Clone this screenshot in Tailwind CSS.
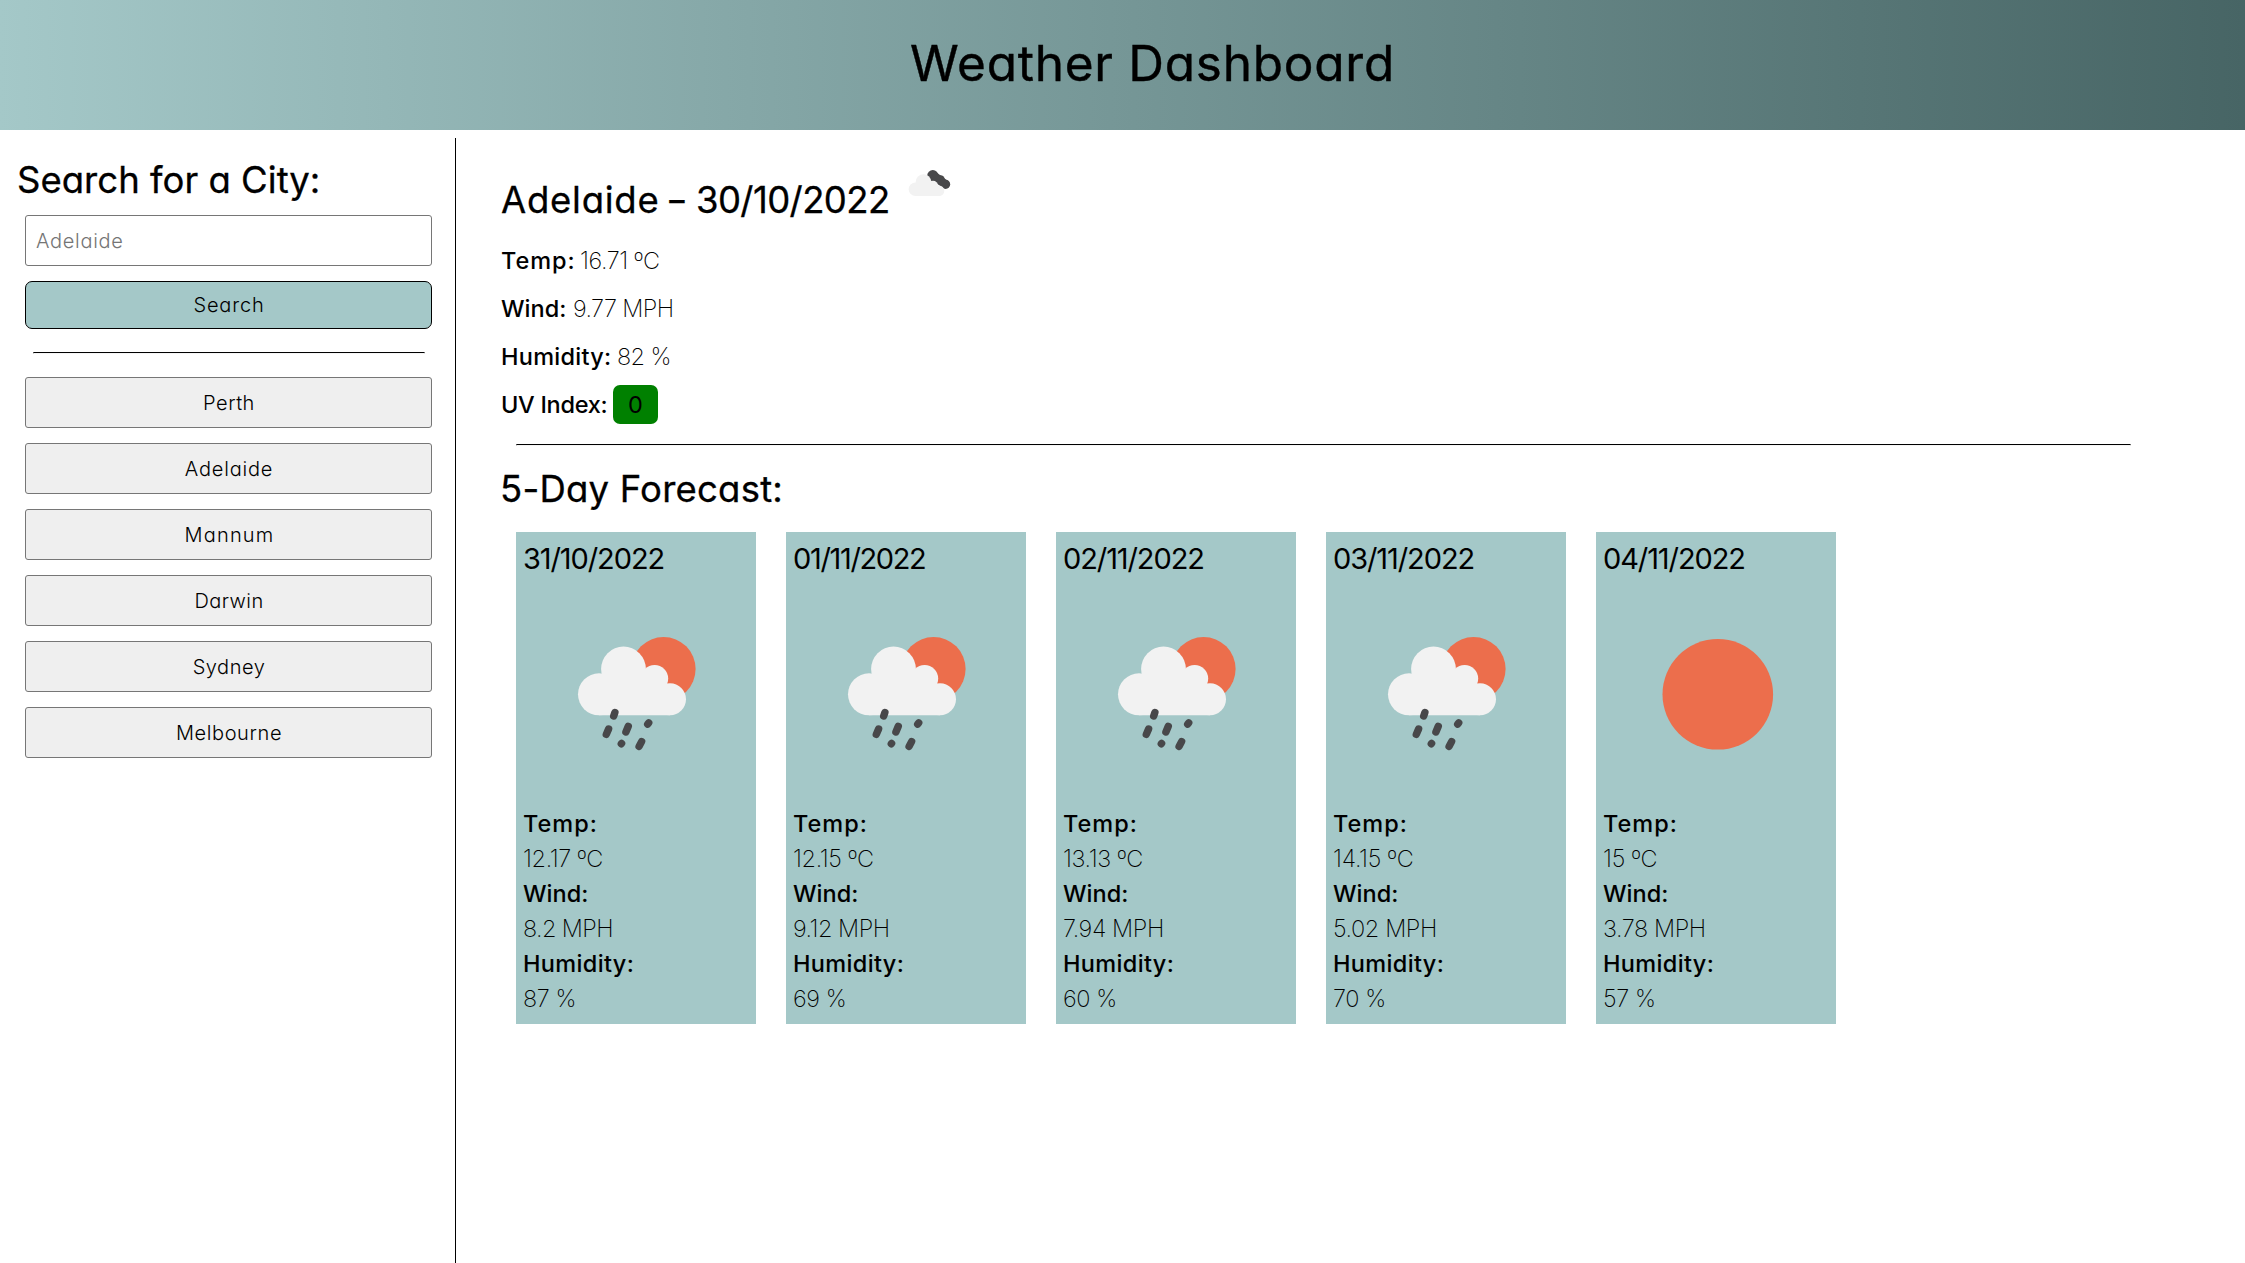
<!DOCTYPE html>
<html lang="en">
<head>
<meta charset="utf-8">
<title>Weather Dashboard</title>
<script src="https://cdn.jsdelivr.net/npm/@tailwindcss/browser@4"></script>
</head>
<body class="h-[1263px] overflow-hidden bg-white text-black font-['Inter','Liberation_Sans',sans-serif] [font-feature-settings:'cv11']">

<svg class="hidden">
  <symbol id="rain" viewBox="0 0 240 228">
    <circle cx="147.6" cy="91" r="32" fill="#ec6e4c"/>
    <g fill="#f2f2f2">
      <circle cx="107.5" cy="91" r="22.4"/>
      <circle cx="138.6" cy="100.5" r="13.6"/>
      <circle cx="83" cy="116.3" r="21"/>
      <circle cx="154" cy="121.3" r="16"/>
      <path d="M83 137.3H154V108L130 92H100L83 100Z"/>
    </g>
    <g stroke="#48484a" stroke-width="7.4" stroke-linecap="round">
      <path d="M97.7 138L98.9 134.6"/>
      <path d="M90.3 156.4L92.6 151"/>
      <path d="M109.9 154L112.3 148.3"/>
      <path d="M131.7 146.2L132.7 144.8"/>
      <path d="M105.3 165.8L105.6 165.4"/>
      <path d="M123.1 168.4L125.6 163.6"/>
    </g>
  </symbol>
</svg>

<header class="h-[130px] bg-linear-[90deg,#a4c8c8,#476565] pl-[60px] text-center">
  <h1 class="text-[49.5px] leading-[126px] tracking-[0.75px] [-webkit-text-stroke:0.4px_black]">Weather Dashboard</h1>
</header>

<div class="flex h-[1133px] pt-2">
  <aside class="w-[456px] shrink-0 border-r border-black pl-[25px] pr-[23px] pt-[17px]">
    <h2 class="-ml-[8px] text-[36.5px] leading-[51px] -mb-px tracking-[0.02px] [-webkit-text-stroke:0.3px_black]">Search for a City:</h2>
    <input class="mt-[10px] block h-[51px] w-full rounded-[3px] border border-[#767676] px-[10px] text-xl font-light tracking-[0.7px] placeholder:text-[#757575]" placeholder="Adelaide">
    <button class="mt-[15px] block h-12 w-full rounded-[7px] border border-black bg-[#a4c8c8] pl-px text-xl font-light tracking-[0.84px]">Search</button>
    <div class="ml-2 mr-[7px] mt-[23px] h-0.5 border border-t-black border-l-neutral-400 border-r-neutral-300 border-b-neutral-100"></div>
    <div class="mt-[23px] flex flex-col gap-[15px] text-xl font-light">
      <button class="h-[51px] rounded-[3px] border border-[#767676] bg-[#efefef] pl-px tracking-[0.5px]">Perth</button>
      <button class="h-[51px] rounded-[3px] border border-[#767676] bg-[#efefef] pl-px tracking-[0.8px]">Adelaide</button>
      <button class="h-[51px] rounded-[3px] border border-[#767676] bg-[#efefef] pl-0.5 tracking-[1.2px]">Mannum</button>
      <button class="h-[51px] rounded-[3px] border border-[#767676] bg-[#efefef] pl-px tracking-[0.45px]">Darwin</button>
      <button class="h-[51px] rounded-[3px] border border-[#767676] bg-[#efefef] pl-px tracking-[0.52px]">Sydney</button>
      <button class="h-[51px] rounded-[3px] border border-[#767676] bg-[#efefef] pl-px tracking-[0.61px]">Melbourne</button>
    </div>
  </aside>

  <main class="flex-1 pl-[45px] pt-[22px]">
    <div class="flex h-[77px] items-start">
      <h2 class="mt-[15px] w-[403px] shrink-0 whitespace-nowrap text-[36.5px] leading-[51px] [-webkit-text-stroke:0.3px_black]"><span class="inline-block w-[165px] tracking-[0.75px]">Adelaide</span><span class="inline-block w-[30px] origin-left scale-x-130">-</span><span class="tracking-[-0.6px]">30/10/2022</span></h2>
      <svg class="size-[50px]" viewBox="904 160 50 50">
        <g fill="#48484a">
          <circle cx="932.8" cy="175.6" r="5.6"/><circle cx="940.5" cy="179.6" r="4.3"/><circle cx="945.6" cy="184.3" r="4.6"/>
          <path d="M929 178L936 172L948 181L943 188Z"/>
        </g>
        <g fill="#f2f2f2">
          <circle cx="923.5" cy="182" r="7.8"/><circle cx="933" cy="185.7" r="5"/><circle cx="915.4" cy="189.3" r="6.7"/><circle cx="939" cy="190.7" r="5.3"/>
          <path d="M915 196H939V187L930 182H918L915 184Z"/>
        </g>
      </svg>
    </div>
    <div class="text-[23.5px] leading-[48px] font-extralight">
      <p class="flex"><span class="w-[79px] font-medium tracking-[0.95px]">Temp:</span><span class="tracking-[-0.45px]">16.71 ºC</span></p>
      <p class="flex"><span class="w-[72px] font-medium">Wind:</span><span class="tracking-[-0.6px]">9.77 MPH</span></p>
      <p class="flex"><span class="w-[116px] font-medium tracking-[0.27px]">Humidity:</span><span class="tracking-[-0.6px]">82 %</span></p>
      <p class="flex"><span class="w-[112px] font-medium tracking-[-0.29px]">UV Index:</span><span class="mt-1 h-[39px] w-[45px] rounded-[7px] bg-[#008000] text-center leading-10 font-normal">0</span></p>
    </div>
    <div class="mt-[15px] ml-[15px] h-0.5 w-[1615px] border border-t-black border-l-neutral-400 border-r-neutral-300 border-b-neutral-100"></div>
    <h2 class="mt-[18px] -ml-px text-[36.5px] leading-[51px] tracking-[0.22px] [-webkit-text-stroke:0.3px_black]">5-Day Forecast:</h2>

    <div class="mt-[17px] ml-[15px] flex gap-[30px] text-[23.5px] leading-[35px] font-extralight">
      <section class="h-[492px] w-60 bg-[#a4c8c8] px-[7px] pt-[7px]">
        <h3 class="text-[29px] leading-10 font-normal tracking-[-1.1px]">31/10/2022</h3>
        <svg class="-ml-[7px] -mt-px h-[228px] w-60"><use href="#rain"/></svg>
        <p class="font-medium tracking-[1px]">Temp:</p><p class="tracking-[-0.4px]">12.17 ºC</p>
        <p class="font-medium">Wind:</p><p class="tracking-[-0.6px]">8.2 MPH</p>
        <p class="font-medium tracking-[0.35px]">Humidity:</p><p class="tracking-[-0.4px]">87 %</p>
      </section>
      <section class="h-[492px] w-60 bg-[#a4c8c8] px-[7px] pt-[7px]">
        <h3 class="text-[29px] leading-10 font-normal tracking-[-1.35px]">01/11/2022</h3>
        <svg class="-ml-[7px] -mt-px h-[228px] w-60"><use href="#rain"/></svg>
        <p class="font-medium tracking-[1px]">Temp:</p><p class="tracking-[-0.4px]">12.15 ºC</p>
        <p class="font-medium">Wind:</p><p class="tracking-[-0.5px]">9.12 MPH</p>
        <p class="font-medium tracking-[0.35px]">Humidity:</p><p class="tracking-[-0.4px]">69 %</p>
      </section>
      <section class="h-[492px] w-60 bg-[#a4c8c8] px-[7px] pt-[7px]">
        <h3 class="text-[29px] leading-10 font-normal tracking-[-1.1px]">02/11/2022</h3>
        <svg class="-ml-[7px] -mt-px h-[228px] w-60"><use href="#rain"/></svg>
        <p class="font-medium tracking-[1px]">Temp:</p><p class="tracking-[-0.4px]">13.13 ºC</p>
        <p class="font-medium">Wind:</p><p class="tracking-[-0.4px]">7.94 MPH</p>
        <p class="font-medium tracking-[0.35px]">Humidity:</p><p class="tracking-[-0.4px]">60 %</p>
      </section>
      <section class="h-[492px] w-60 bg-[#a4c8c8] px-[7px] pt-[7px]">
        <h3 class="text-[29px] leading-10 font-normal tracking-[-1.1px]">03/11/2022</h3>
        <svg class="-ml-[7px] -mt-px h-[228px] w-60"><use href="#rain"/></svg>
        <p class="font-medium tracking-[1px]">Temp:</p><p class="tracking-[-0.3px]">14.15 ºC</p>
        <p class="font-medium">Wind:</p><p class="tracking-[-0.4px]">5.02 MPH</p>
        <p class="font-medium tracking-[0.35px]">Humidity:</p><p class="tracking-[-0.4px]">70 %</p>
      </section>
      <section class="h-[492px] w-60 bg-[#a4c8c8] px-[7px] pt-[7px]">
        <h3 class="text-[29px] leading-10 font-normal tracking-[-1.1px]">04/11/2022</h3>
        <svg class="-ml-[7px] -mt-px h-[228px] w-60" viewBox="0 0 240 228"><circle cx="121.8" cy="116.3" r="55.3" fill="#ec6e4c"/></svg>
        <p class="font-medium tracking-[1px]">Temp:</p><p class="tracking-[-0.3px]">15 ºC</p>
        <p class="font-medium">Wind:</p><p class="tracking-[-0.4px]">3.78 MPH</p>
        <p class="font-medium tracking-[0.35px]">Humidity:</p><p class="tracking-[-0.4px]">57 %</p>
      </section>
    </div>
  </main>
</div>
</body>
</html>
